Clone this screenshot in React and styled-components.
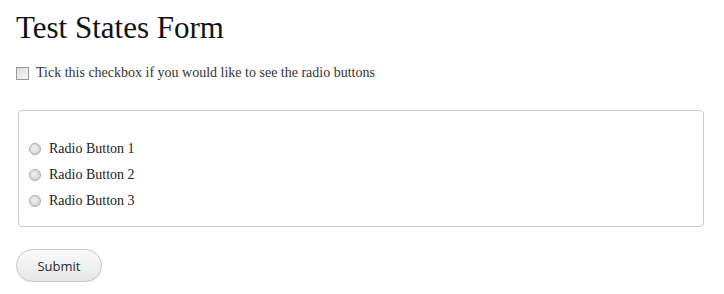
import React, { useState } from 'react';
import styled, { createGlobalStyle } from 'styled-components';

const GlobalStyle = createGlobalStyle`
  html, body {
    margin: 0;
    padding: 0;
    background: #fff;
  }
  body {
    font-family: "Liberation Serif", "Times New Roman", serif;
    color: #333;
  }
`;

const Page = styled.div`
  padding: 10px 20px 0 16px;
`;

const Title = styled.h1`
  margin: 0;
  font-size: 31px;
  font-weight: normal;
  color: #111;
  line-height: 36px;
`;

const CheckRow = styled.label`
  display: flex;
  align-items: center;
  gap: 7px;
  margin-top: 19px;
  font-size: 14px;
  color: #333;
`;

const Box = styled.span`
  width: 11px;
  height: 11px;
  border: 1px solid #9a9a9a;
  background: linear-gradient(135deg, #dcdcdc, #f6f6f6);
  box-sizing: content-box;
  flex: none;
`;

const Group = styled.div`
  margin: 29px 0 0 2px;
  border: 1px solid #ccc;
  border-radius: 4px;
  padding: 29px 10px 17px 10px;
  display: flex;
  flex-direction: column;
  gap: 9px;
`;

const RadioRow = styled.label`
  display: flex;
  align-items: center;
  gap: 8px;
  font-size: 14px;
  color: #222;
  height: 17px;
`;

const Dot = styled.span`
  width: 10px;
  height: 10px;
  border-radius: 50%;
  border: 1px solid #a8a8a8;
  background: radial-gradient(circle at 40% 40%, #f2f2f2, #c9c9c9);
  flex: none;
`;

const Submit = styled.button`
  margin-top: 22px;
  width: 86px;
  height: 33px;
  border-radius: 17px;
  border: 1px solid #c8c8c8;
  background: linear-gradient(#fafafa, #e6e6e6);
  font-family: "Open Sans", "DejaVu Sans", sans-serif;
  font-size: 13px;
  color: #2a2a2a;
  box-shadow: 0 1px 1px rgba(0, 0, 0, 0.08);
`;

export default function App() {
  const [items] = useState(['Radio Button 1', 'Radio Button 2', 'Radio Button 3']);
  return (
    <>
      <GlobalStyle />
      <Page>
        <Title>Test States Form</Title>
        <CheckRow>
          <Box />
          Tick this checkbox if you would like to see the radio buttons
        </CheckRow>
        <Group>
          {items.map((t) => (
            <RadioRow key={t}>
              <Dot />
              {t}
            </RadioRow>
          ))}
        </Group>
        <Submit type="button">Submit</Submit>
      </Page>
    </>
  );
}
